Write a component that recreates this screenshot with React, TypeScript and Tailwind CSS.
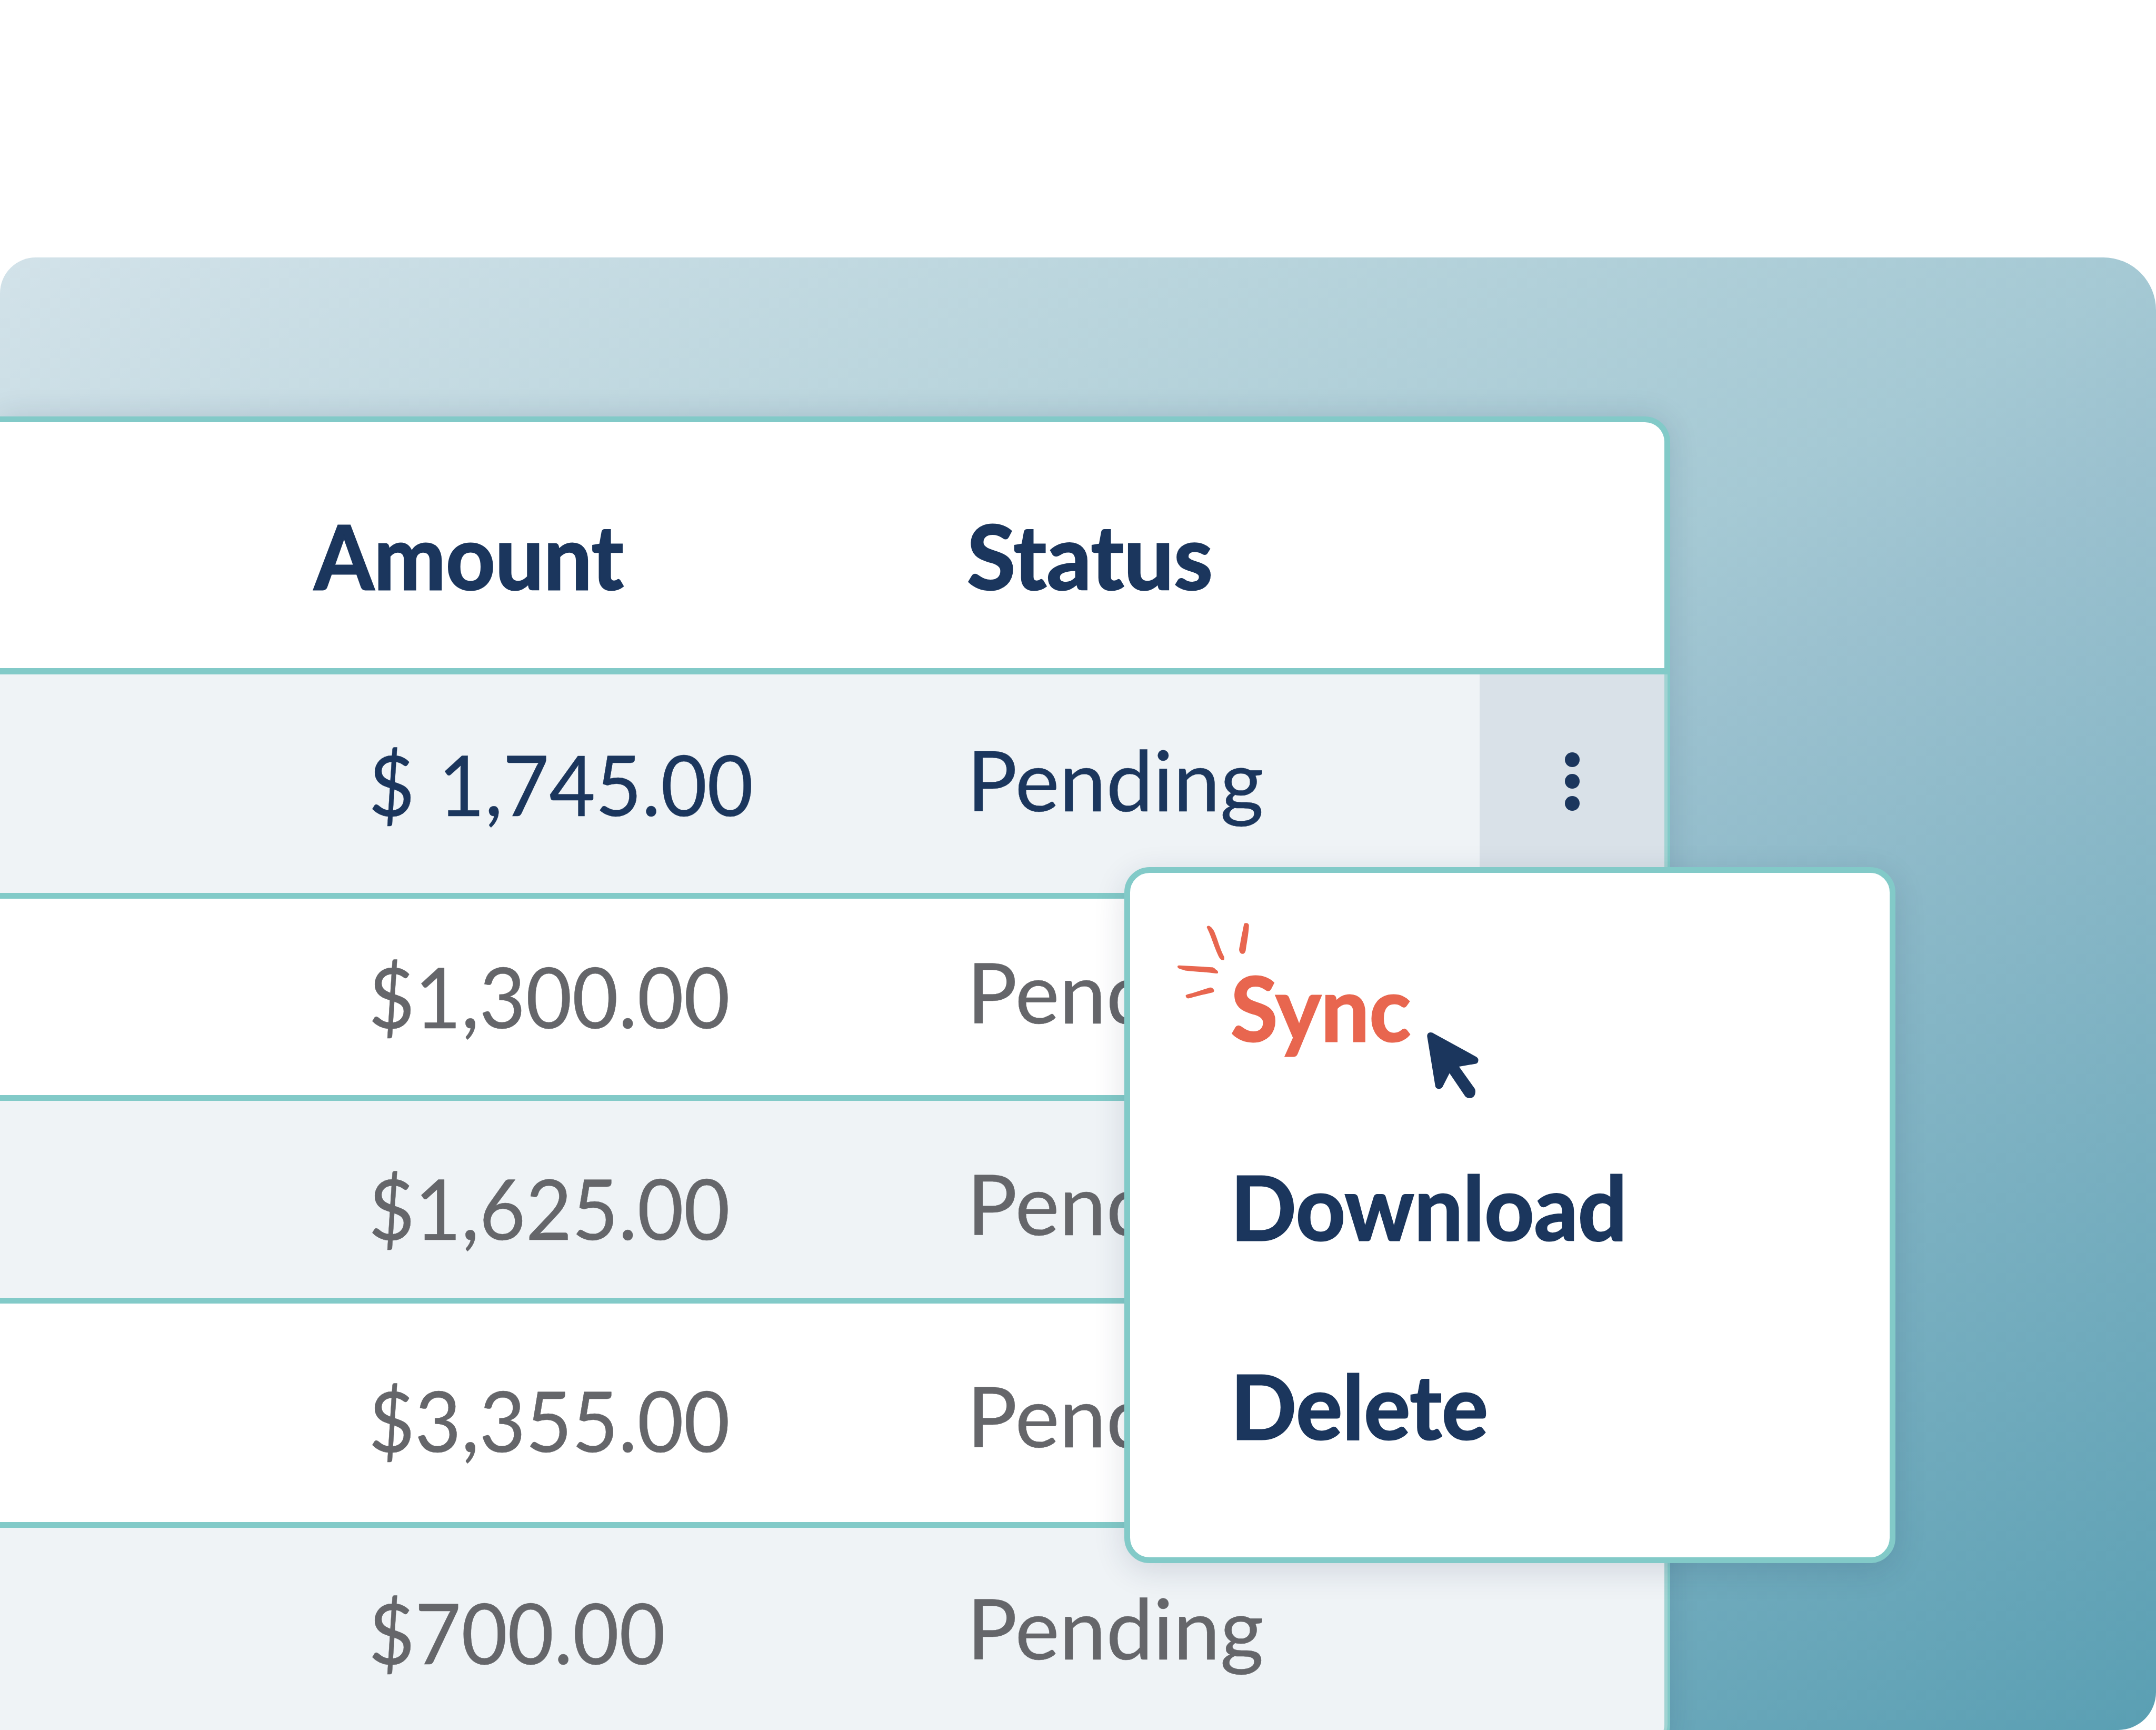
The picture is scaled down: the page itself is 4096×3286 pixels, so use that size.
import clsx from 'clsx'

interface Row {
  amount: string
  status: string
  height: string
  offset: string
  shaded?: boolean
  active?: boolean
}

const rows: Row[] = [
  { amount: '$ 1,745.00', status: 'Pending', height: 'h-[415px]', offset: 'pt-[98px]', shaded: true, active: true },
  { amount: '$1,300.00', status: 'Pending', height: 'h-[373px]', offset: 'pt-[75px]' },
  { amount: '$1,625.00', status: 'Pending', height: 'h-[374px]', offset: 'pt-[93px]', shaded: true },
  { amount: '$3,355.00', status: 'Pending', height: 'h-[415px]', offset: 'pt-[111px]' },
  { amount: '$700.00', status: 'Pending', height: 'h-[410px]', offset: 'pt-[88px]', shaded: true },
]

function KebabDots() {
  return (
    <div className="flex flex-col items-center gap-[13.5px]">
      <span className="size-7 rounded-full bg-[#1b365d]" />
      <span className="size-7 rounded-full bg-[#1b365d]" />
      <span className="size-7 rounded-full bg-[#1b365d]" />
    </div>
  )
}

function TableRow({ row, last }: { row: Row; last: boolean }) {
  return (
    <>
      <div
        className={clsx(
          'flex text-[160px] leading-[200px] [-webkit-text-stroke:0.5px_currentColor]',
          row.height,
          row.shaded ? '-mr-[6px] border-r-[6px] border-[#a1d3d2] bg-[#eff3f6]' : 'bg-white',
          row.active ? 'text-[#1b365d]' : 'text-[#65666a]',
          last && 'rounded-br-[37px]',
        )}
      >
        <div className={clsx('w-[1837px] shrink-0 pl-[700px]', row.offset)}>
          <span className="relative top-[8.5px] inline-block origin-left scale-x-[0.949] whitespace-pre [word-spacing:6px]">
            {row.amount}
          </span>
        </div>
        <div className={clsx('flex-1', row.offset)}>
          <span className="inline-block origin-left scale-x-[0.996]">{row.status}</span>
        </div>
        {row.active && (
          <div className="flex w-[351px] items-start justify-center bg-[#d9e1e8] pt-[147.5px]">
            <KebabDots />
          </div>
        )}
      </div>
      {!last && <div className="h-[11px] bg-[#82cac8]" />}
    </>
  )
}

// Hand-drawn rays next to the highlighted menu item
function Spark() {
  return (
    <svg className="absolute left-[90px] top-[95px] h-[144px] w-[137px]" viewBox="0 0 137 144" fill="#e8664f">
      <path d="M55.7 8.5C55.5 6 58.5 4.8 61 6C66 9 69 14 70.7 18.2C77 34 81 50 88.5 64C89.5 67 89 70 87.7 70.5C82 71 80 67 77.4 61.9C70 47 65 27 55.7 8.5Z" />
      <path d="M126.4 2C127 0 132 -.5 133.6 1C135.5 2.5 135.9 4 135.7 6C135 22 131.5 37 129.5 53C128.5 57 126 59 123.8 58.8C119.5 59 117 54 117.1 50.2C117.5 46 118.7 43 119 40C121 27 124 15 126.4 2Z" />
      <path d="M0 83.6C0 81.5 1 80.5 3.5 80.8C24 82 44 82.7 64.5 84.3C69 84.5 70 85.7 71.5 87.5C74 89.5 77 91 77 93.5C77.5 96 76 96.3 73 96C54 93 34 93 14.5 90.5C10 88.5 1 88 0 83.6Z" />
      <path d="M15.5 139C15.3 137 17 136.5 19.6 135.5C33 132.5 45 127.5 57.5 124C62 122 64.5 122.5 66.5 124C69 126 70 128 69.4 129.5C69 132 66 132.5 63 133C50 136 37 139 25.8 142.3C22 143.5 18.5 144 17.5 142.5Z" />
    </svg>
  )
}

function Cursor() {
  return (
    <svg className="absolute left-[564px] top-[303px] h-[126px] w-[99px]" viewBox="0 0 99 126" fill="#1b365d">
      <path d="M.4 8C-.2 2 4 -.3 7.2 0C9.5 0 11 .8 12.4 1.8L93.9 46.4C97 48.5 97.8 51 97.5 53C97.3 57 95.5 59 92.9 59.4L60.9 65L89.5 105C92 108.5 92.3 111 91.8 114.5C91.4 119 89.5 121.5 86.5 123.5C82 126 75 125 72 120.4L42.8 77.4L29.8 103C28.5 106 25.5 107.3 22.7 107.3C18.5 107.2 16.2 105 15.7 101.5Z" />
    </svg>
  )
}

function ActionMenu() {
  return (
    <div className="absolute left-[2136px] top-[1158px] h-[1322px] w-[1465px] rounded-[48px] border-[11px] border-[#82cac8] bg-white pl-[191px] pt-[66px] text-[169px] font-bold leading-[378px] text-[#1b365d] shadow-[0_14px_60px_rgba(25,45,80,0.14)] [-webkit-text-stroke:3px_currentColor]">
      <Spark />
      <div className="text-[#e8664f]">
        <span className="inline-block origin-left scale-x-[0.966]">Sync</span>
      </div>
      <Cursor />
      <div>
        <span className="inline-block origin-left scale-x-[0.972]">Download</span>
      </div>
      <div>
        <span className="inline-block origin-left scale-x-[0.975]">Delete</span>
      </div>
    </div>
  )
}

export default function App() {
  return (
    <div className="h-[3286px] w-[4096px] overflow-hidden bg-white pt-[489px] font-['Lato',sans-serif]">
      <div className="relative h-[2797px] overflow-hidden rounded-br-[72px] rounded-tl-[68px] rounded-tr-[100px] bg-[linear-gradient(150deg,#d2e2e9_0%,#b8d4dc_27%,#a5c9d4_46%,#9bc1cf_53%,#5a9fb3_100%)] pt-[302px]">
        <div className="h-[2533px] w-[3173px] rounded-r-[48px] bg-[#82cac8] pr-[11px] pt-[11px] shadow-[0_0_56px_rgba(25,45,80,0.14)]">
          <div className="flex h-[467px] rounded-tr-[37px] bg-white pt-[153px] text-[169px] font-bold leading-[200px] text-[#1b365d] [-webkit-text-stroke:3px_currentColor]">
            <div className="w-[1837px] pl-[597px]">
              <span className="inline-block origin-left scale-x-[0.966]">Amount</span>
            </div>
            <div>
              <span className="inline-block origin-left scale-x-[0.996]">Status</span>
            </div>
          </div>
          <div className="h-[12px] bg-[#82cac8]" />
          {rows.map((row, i) => (
            <TableRow key={row.amount} row={row} last={i === rows.length - 1} />
          ))}
        </div>
        <ActionMenu />
      </div>
    </div>
  )
}
